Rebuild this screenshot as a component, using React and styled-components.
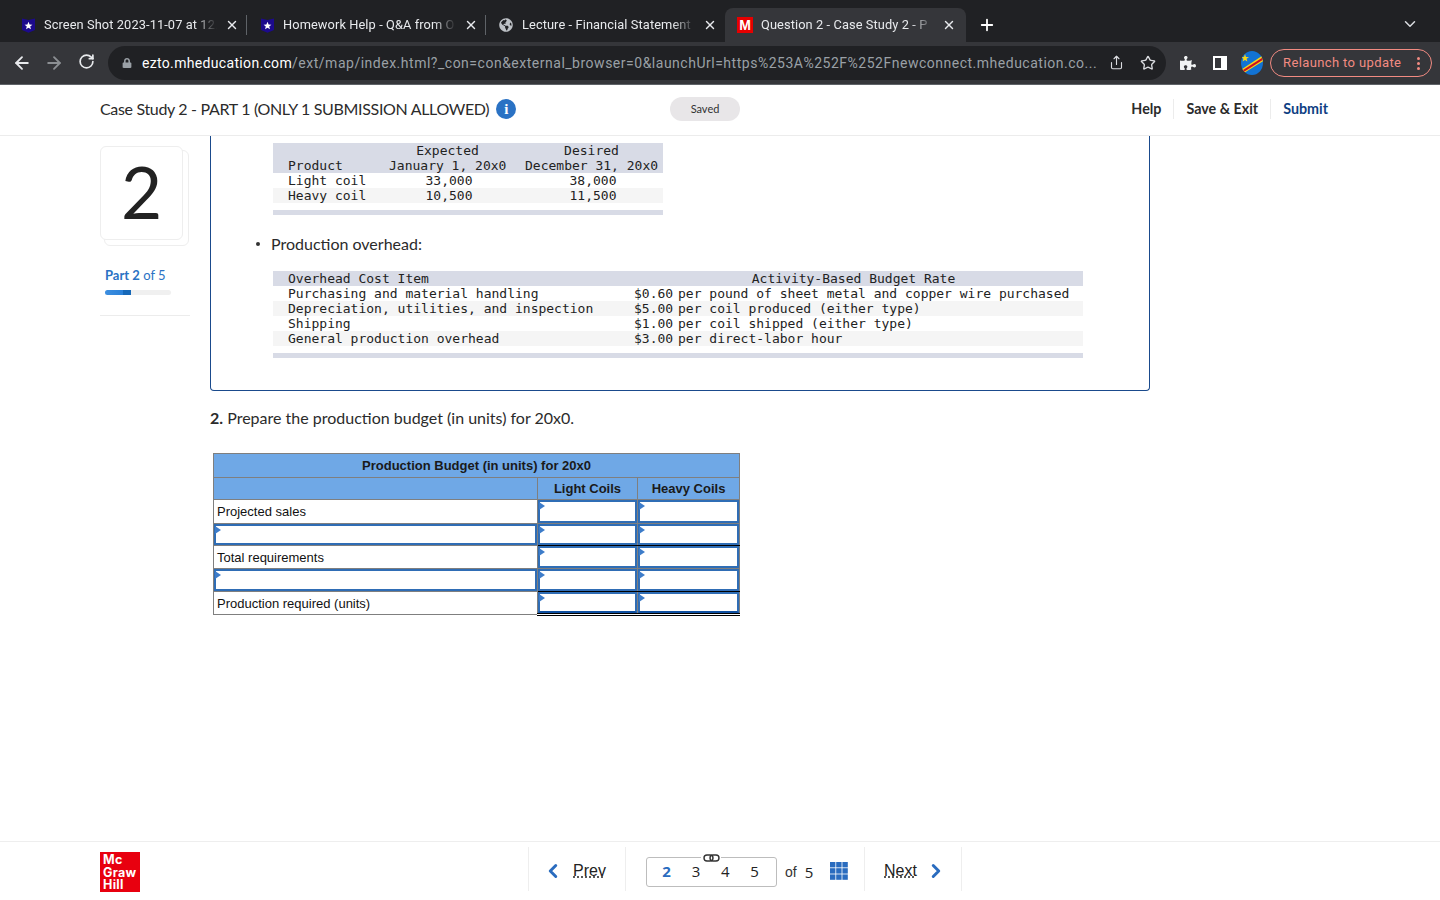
import React from 'react';
import styled, { createGlobalStyle } from 'styled-components';
import { ArrowLeft, ArrowRight, RotateCw, Share, Star, X, Plus, ChevronDown, ChevronLeft, ChevronRight } from 'lucide-react';
import { FaLock, FaPuzzlePiece, FaGlobeAmericas } from 'react-icons/fa';

const Global = createGlobalStyle`
  html, body { margin: 0; padding: 0; background: #fff; overflow: hidden; }
  * { box-sizing: border-box; }
`;

const Page = styled.div`
  width: 1440px; height: 900px; display: flex; flex-direction: column;
  font-family: Lato, "Open Sans", sans-serif; color: #2b2b2b; background: #fff;
`;

const TabStrip = styled.div`
  height: 42px; background: #202124; display: flex; align-items: flex-end; padding-left: 8px;
`;
const Tab = styled.div`
  width: ${p => (p.$active ? 241 : 239)}px; height: 34px; display: flex; align-items: center;
  padding: 0 ${p => (p.$active ? 10 : 8)}px 0 12px; position: relative;
  background: ${p => (p.$active ? '#35363a' : 'transparent')};
  border-radius: 8px 8px 0 0;
  &::after {
    content: ''; position: absolute; right: 0; top: 7px; height: 20px; width: 1px;
    background: ${p => (p.$sep ? '#5f6368' : 'transparent')};
  }
`;
const Fav = styled.span`
  width: 16px; height: 16px; flex: none; display: flex; align-items: center; justify-content: center; margin-right: 8px;
`;
const TabTitle = styled.span`
  flex: 1; font: 12.8px Roboto, sans-serif; letter-spacing: .1px; color: #e8eaed; white-space: nowrap; min-width: 0; margin-bottom: 2px;
  -webkit-mask-image: linear-gradient(to right, #000 87%, transparent 100%);
  mask-image: linear-gradient(to right, #000 87%, transparent 100%);
`;
const TabClose = styled(X)`
  flex: none; margin-left: 8px; color: #e8eaed;
`;
const NewTab = styled(Plus)`
  color: #fff; margin-left: 12px; margin-bottom: 8px;
`;
const TabMenu = styled(ChevronDown)`
  color: #dadce0; margin-left: auto; margin-right: 21px; margin-bottom: 9px;
`;
const MLogo = styled.span`
  width: 16px; height: 16px; background: #e60000; color: #fff; font: bold 14px/16px "Liberation Sans", sans-serif; text-align: center;
`;

const Toolbar = styled.div`
  height: 43px; background: #35363a; border-bottom: 1px solid #5f6368; display: flex; align-items: center; padding: 0 8px 1px 0;
`;
const NavIcon = styled.span`
  width: 32px; display: flex; justify-content: center; color: ${p => p.$dim ? '#8c8f93' : '#e8eaed'};
`;
const NavIcons = styled.div`
  display: flex; padding-left: 6px; width: 108px;
`;
const Omnibox = styled.div`
  width: 1058px; height: 34px; border-radius: 17px; background: #202124; display: flex; align-items: center; padding: 0 2px 0 14px;
`;
const LockWrap = styled.span`
  color: #9aa0a6; display: flex; width: 20px;
`;
const Url = styled.span`
  width: 958px; font: 14px Roboto, sans-serif; color: #9aa0a6; white-space: nowrap; letter-spacing: .51px;
  b { font-weight: 400; color: #fff; letter-spacing: .33px; }
`;
const OmniIcon = styled.span`
  width: 32px; display: flex; justify-content: center; color: #dadce0;
`;
const ExtIcons = styled.div`
  display: flex; align-items: center; margin-left: 6px;
`;
const ExtSlot = styled.span`
  width: 32px; display: flex; justify-content: center; color: #f1f3f4;
`;
const SidePanelIcon = styled.span`
  width: 14px; height: 14px; border: 2px solid #fff; border-right-width: 6px; background: #35363a;
`;
const Relaunch = styled.div`
  margin-left: 2px; width: 162px; height: 28px; border: 1px solid #f28b82; border-radius: 14px; display: flex; align-items: center;
  padding-left: 12px; color: #f28b82; font: 13px Roboto, sans-serif; letter-spacing: .38px; position: relative;
`;
const Dots = styled.span`
  position: absolute; right: 11px; top: 7px; display: flex; flex-direction: column; gap: 2px;
  i { width: 3px; height: 3px; border-radius: 50%; background: #f28b82; display: block; }
`;

const Header = styled.header`
  height: 51px; flex: none; display: flex; align-items: center; padding: 0 112px 3px 100px; border-bottom: 1px solid #ececec;
`;
const TitleBlock = styled.div`
  width: 570px; display: flex; align-items: center; gap: 7px;
`;
const Title = styled.h1`
  margin: 0; font: 400 16px Lato, sans-serif; letter-spacing: -.33px; color: #2b2b2b; white-space: nowrap;
`;
const InfoDot = styled.span`
  width: 20px; height: 20px; border-radius: 50%; background: #2a72c4; color: #fff; display: flex; align-items: center; justify-content: center;
  font: bold 15px/20px "Liberation Serif", serif;
`;
const SavedPill = styled.span`
  width: 70px; height: 24px; border-radius: 12px; background: #e8e6e8; display: flex; align-items: center; justify-content: center;
  font: 11px Lato, sans-serif; color: #333;
`;
const HeaderLinks = styled.nav`
  margin-left: auto; display: flex; align-items: center;
`;
const HeaderLink = styled.span`
  font: 700 14.3px Lato, sans-serif; color: ${p => p.$primary ? '#0f3f83' : '#2b2b2b'}; padding: 0 12px;
  border-right: ${p => p.$sep ? '1px solid #ececec' : 'none'}; line-height: 20px;
  &:last-child { padding-right: 0; }
`;

const Main = styled.main`
  flex: 1; display: flex; padding-left: 100px; min-height: 0;
`;
const Side = styled.aside`
  width: 90px; padding-top: 10px; flex: none; display: flex; flex-direction: column;
`;
const NumberStack = styled.div`
  position: relative; width: 83px; height: 94px;
  &::before {
    content: ''; position: absolute; left: 4px; top: 4px; width: 83px; height: 94px; border: 1px solid #eee; border-radius: 6px; background: #fff;
  }
`;
const NumberCard = styled.div`
  position: relative; width: 83px; height: 94px; border: 1px solid #eee; border-radius: 6px; background: #fff; padding-bottom: 3px;
  display: flex; align-items: center; justify-content: center; font: 400 71px/1 Lato, sans-serif; color: #222;
`;
const PartLabel = styled.div`
  margin: 27px 0 0 5px; font: 13px Lato, sans-serif; color: #2a72c4; b { font-weight: 700; }
`;
const Progress = styled.div`
  margin: 7px 0 0 5px; width: 66px; height: 5px; border-radius: 3px; background: #f0f0f0; overflow: hidden;
`;
const ProgressFill = styled.div`
  height: 100%; background: linear-gradient(90deg, #3d8fe0 0%, #2a80d8 70%, #1668b8 70%);
`;
const SideRule = styled.div`
  margin-top: 20px; height: 1px; background: #ececec;
`;
const Content = styled.div`
  margin-left: 20px; width: 940px;
`;
const Card = styled.section`
  height: 255px; border: 1px solid #1a4a8c; border-top: none; border-radius: 0 0 4px 4px; padding: 7px 0 0 62px;
`;
const Mono = styled.div`
  font: 13px/15px "DejaVu Sans Mono", monospace; color: #222; white-space: pre;
`;
const MonoA = styled(Mono)`width: 390px;`;
const MonoB = styled(Mono)`width: 810px;`;
const RowA = styled.div`
  display: grid; grid-template-columns: 101px 117px 19px 133px; padding-left: 15px; height: 15px;
  background: ${p => p.$bg || 'transparent'};
`;
const CellCenter = styled.span`
  text-align: center; grid-column: ${p => p.$col};
`;
const CellData = styled(CellCenter)`
  padding-left: 3px;
`;
const EndBar = styled.div`
  height: 5px; background: #d8dbe6; margin-top: 7px;
`;
const RowB = styled.div`
  display: grid; grid-template-columns: 346px 44px 1fr; padding-left: 15px; height: 15px;
  background: ${p => p.$bg || 'transparent'};
`;
const RowBHead = styled.span`
  grid-column: 2 / 4; text-align: center; padding-right: 10px;
`;
const Bullet = styled.ul`
  margin: 17px 0 15px -16px; padding: 0; list-style: none; display: flex; align-items: center; gap: 11px;
  font: 16px/24px Lato, sans-serif;
  &::before { content: ''; width: 4px; height: 4px; border-radius: 50%; background: #333; margin-left: -1px; }
`;
const Question = styled.p`
  margin: 15px 0 0; font: 16px/24px Lato, sans-serif; color: #2b2b2b; b { font-weight: 700; }
`;
const Budget = styled.table`
  margin: 23px 0 0 3px; width: 526px; table-layout: fixed; border-collapse: collapse;
  font: 13px "Liberation Sans", Arial, sans-serif; color: #111;
`;
const Tr = styled.tr`
  height: ${p => p.$h}px;
`;
const Head = styled.th`
  background: #6fa8e6; border: 1px solid #7f7f7f; padding: 0; font-weight: 700; font-size: 13px; color: #1a1a1a;
`;
const Label = styled.td`
  border: 1px solid #7f7f7f; padding: 0 3px; background: #fff;
`;
const InputCell = styled.td`
  padding: 0; background: #fff; position: relative;
  border-top: 1px solid #7f7f7f; border-left: 1px solid #7f7f7f; border-right: 1px solid #7f7f7f;
  border-bottom: ${p => p.$total === 'double' ? '3px double #000' : p.$total ? '1px solid #000' : '1px solid #7f7f7f'};
`;
const InputBox = styled.div`
  height: ${p => p.$h}px; border: 2px solid #2f6db5; position: relative;
  border-bottom-color: ${p => p.$dark ? '#0f4fa0' : '#2f6db5'};
  &::before {
    content: ''; position: absolute; left: -1px; top: 0; border-left: 6px solid #3d7cc9; border-top: 4px solid transparent; border-bottom: 4px solid transparent;
  }
`;

const Footer = styled.footer`
  height: 59px; flex: none; border-top: 1px solid #eeeeee; display: flex; padding-left: 100px;
`;
const McLogo = styled.div`
  margin-top: 10px; width: 40px; height: 40px; background: #e8000f; color: #fff; padding: 2px 0 0 3px;
  font: 700 12.5px/12.5px Inter, sans-serif; letter-spacing: .3px;
`;
const Pagination = styled.nav`
  margin-left: 388px; margin-top: 5px; height: 44px; display: flex; align-items: center;
`;
const StepBtn = styled.div`
  width: ${p => p.$w}px; height: 100%; display: flex; align-items: center; padding: 3px 0 0 ${p => p.$pl}px; gap: ${p => p.$gap}px;
  border-left: 1px solid #eeeeee; border-right: ${p => p.$end ? '1px solid #eeeeee' : 'none'};
  font: 16px "Liberation Sans", sans-serif; color: #222;
  span { text-decoration: underline dotted; text-underline-offset: 1px; }
`;
const BlueChevL = styled(ChevronLeft)`color: #2a6cbf; flex: none;`;
const BlueChevR = styled(ChevronRight)`color: #2a6cbf; flex: none;`;
const Pager = styled.div`
  width: 239px; height: 100%; display: flex; align-items: center; padding: 6px 0 0 20px;
  border-left: 1px solid #eeeeee;
`;
const PageBox = styled.div`
  position: relative; width: 131px; height: 30px; border: 1px solid #bdbdbd; border-radius: 3px; display: flex; align-items: center; padding: 0 0 3px 5px;
`;
const PageNum = styled.span`
  width: 29.3px; text-align: center; font: ${p => p.$on ? 700 : 400} 15px "Open Sans", sans-serif; color: ${p => p.$on ? '#2a6cbf' : '#222'};
`;
const LinkBadge = styled.span`
  position: absolute; left: 54px; top: -6px; width: 20px; height: 12px; background: #fff; display: flex; justify-content: center; align-items: center;
`;
const OfText = styled.span`
  margin-left: 8px; font: 14px "Liberation Sans", sans-serif; color: #333;
`;
const OfNum = styled.span`
  margin-left: 8px; font: 15px "Open Sans", sans-serif; color: #222;
`;
const GridIcon = styled.svg`
  margin: -3px 0 0 17px; flex: none;
`;

const Shield = () => (
  <svg width="15" height="15" viewBox="0 0 15 15">
    <path d="M1 0.5 L7.5 2 L14 0.5 V12 L7.5 14.8 L1 12 Z" fill="#1c0a8c" />
    <path d="M7.5 3.8 L8.6 6.6 L11.4 6.8 L9.2 8.5 L10 11.2 L7.5 9.7 L5 11.2 L5.8 8.5 L3.6 6.8 L6.4 6.6 Z" fill="#fff" />
  </svg>
);

const Flag = () => (
  <svg width="22" height="24" viewBox="0 0 22 24">
    <defs><clipPath id="fl"><ellipse cx="11" cy="12" rx="11" ry="12" /></clipPath></defs>
    <g clipPath="url(#fl)">
      <rect width="22" height="24" fill="#1273d4" />
      <path d="M-2 20 L24 3 V9 L-2 25 Z" fill="#f7d618" />
      <path d="M-2 21.5 L24 5 V7.5 L-2 24 Z" fill="#ce1021" />
      <path d="M4 3 L5 6 L8 6 L5.6 7.8 L6.4 10.6 L4 9 L1.6 10.6 L2.4 7.8 L0 6 L3 6 Z" fill="#f7d618" />
    </g>
  </svg>
);

const rowsA = [
  ['Light coil', '33,000', '38,000', 'transparent'],
  ['Heavy coil', '10,500', '11,500', '#f5f5f5'],
];
const rowsB = [
  ['Purchasing and material handling', '$0.60', 'per pound of sheet metal and copper wire purchased', 'transparent'],
  ['Depreciation, utilities, and inspection', '$5.00', 'per coil produced (either type)', '#f5f5f5'],
  ['Shipping', '$1.00', 'per coil shipped (either type)', 'transparent'],
  ['General production overhead', '$3.00', 'per direct-labor hour', '#f5f5f5'],
];
const tabs = [
  { fav: <Shield />, title: 'Screen Shot 2023-11-07 at 12.', sep: true },
  { fav: <Shield />, title: 'Homework Help - Q&A from O', sep: true },
  { fav: <FaGlobeAmericas size={14} color="#bdc1c6" />, title: 'Lecture - Financial Statement' },
  { fav: <MLogo>M</MLogo>, title: 'Question 2 - Case Study 2 - P', active: true },
];

const BudgetRow = ({ h, label, total }) => (
  <Tr $h={h}>
    {label ? <Label>{label}</Label> : <InputCell><InputBox $h={h - 1} /></InputCell>}
    <InputCell $total={total}><InputBox $h={h - 1} $dark={total === 'double'} /></InputCell>
    <InputCell $total={total}><InputBox $h={h - 1} $dark={total === 'double'} /></InputCell>
  </Tr>
);

export default function App() {
  return (
    <Page>
      <Global />
      <TabStrip>
        {tabs.map(t => (
          <Tab key={t.title} $active={t.active} $sep={t.sep}>
            <Fav>{t.fav}</Fav>
            <TabTitle>{t.title}</TabTitle>
            <TabClose size={14} strokeWidth={2.4} />
          </Tab>
        ))}
        <NewTab size={18} strokeWidth={2.4} />
        <TabMenu size={18} strokeWidth={2} />
      </TabStrip>
      <Toolbar>
        <NavIcons>
          <NavIcon><ArrowLeft size={20} strokeWidth={2.2} /></NavIcon>
          <NavIcon $dim><ArrowRight size={20} strokeWidth={2.2} /></NavIcon>
          <NavIcon><RotateCw size={17} strokeWidth={2.4} /></NavIcon>
        </NavIcons>
        <Omnibox>
          <LockWrap><FaLock size={10} /></LockWrap>
          <Url><b>ezto.mheducation.com</b>/ext/map/index.html?_con=con&amp;external_browser=0&amp;launchUrl=https%253A%252F%252Fnewconnect.mheducation.co...</Url>
          <OmniIcon><Share size={15} strokeWidth={1.8} /></OmniIcon>
          <OmniIcon><Star size={16} strokeWidth={2} /></OmniIcon>
        </Omnibox>
        <ExtIcons>
          <ExtSlot><FaPuzzlePiece size={16} /></ExtSlot>
          <ExtSlot><SidePanelIcon /></ExtSlot>
          <ExtSlot><Flag /></ExtSlot>
        </ExtIcons>
        <Relaunch>Relaunch to update<Dots><i /><i /><i /></Dots></Relaunch>
      </Toolbar>
      <Header>
        <TitleBlock>
          <Title>Case Study 2 - PART 1 (ONLY 1 SUBMISSION ALLOWED)</Title>
          <InfoDot>i</InfoDot>
        </TitleBlock>
        <SavedPill>Saved</SavedPill>
        <HeaderLinks>
          <HeaderLink $sep>Help</HeaderLink>
          <HeaderLink $sep>Save &amp; Exit</HeaderLink>
          <HeaderLink $primary>Submit</HeaderLink>
        </HeaderLinks>
      </Header>
      <Main>
        <Side>
          <NumberStack><NumberCard>2</NumberCard></NumberStack>
          <PartLabel><b>Part 2</b> of 5</PartLabel>
          <Progress><ProgressFill style={{ width: `${(2 / 5) * 100}%` }} /></Progress>
          <SideRule />
        </Side>
        <Content>
          <Card>
            <MonoA>
              <RowA $bg="#d8dbe6"><CellCenter $col={2}>Expected</CellCenter><CellCenter $col={4}>Desired</CellCenter></RowA>
              <RowA $bg="#d8dbe6"><span>Product</span><CellCenter $col={2}>January 1, 20x0</CellCenter><CellCenter $col={4}>December 31, 20x0</CellCenter></RowA>
              {rowsA.map(r => (
                <RowA key={r[0]} $bg={r[3]}><span>{r[0]}</span><CellData $col={2}>{r[1]}</CellData><CellData $col={4}>{r[2]}</CellData></RowA>
              ))}
              <EndBar />
            </MonoA>
            <Bullet><li>Production overhead:</li></Bullet>
            <MonoB>
              <RowB $bg="#d8dbe6"><span>Overhead Cost Item</span><RowBHead>Activity-Based Budget Rate</RowBHead></RowB>
              {rowsB.map(r => (
                <RowB key={r[0]} $bg={r[3]}><span>{r[0]}</span><span>{r[1]}</span><span>{r[2]}</span></RowB>
              ))}
              <EndBar />
            </MonoB>
          </Card>
          <Question><b>2.</b> Prepare the production budget (in units) for 20x0.</Question>
          <Budget>
            <colgroup><col width="324" /><col width="100" /><col width="102" /></colgroup>
            <tbody>
              <Tr $h={24}><Head colSpan={3}>Production Budget (in units) for 20x0</Head></Tr>
              <Tr $h={22}><Head /><Head>Light Coils</Head><Head>Heavy Coils</Head></Tr>
              <BudgetRow h={24} label="Projected sales" />
              <BudgetRow h={22} total="single" />
              <BudgetRow h={23} label="Total requirements" />
              <BudgetRow h={23} total="single" />
              <BudgetRow h={22} label="Production required (units)" total="double" />
            </tbody>
          </Budget>
        </Content>
      </Main>
      <Footer>
        <McLogo>Mc<br />Graw<br />Hill</McLogo>
        <Pagination>
          <StepBtn $w={97} $pl={13} $gap={9}><BlueChevL size={22} strokeWidth={3.2} /><span>Prev</span></StepBtn>
          <Pager>
            <PageBox>
              <PageNum $on>2</PageNum><PageNum>3</PageNum><PageNum>4</PageNum><PageNum>5</PageNum>
              <LinkBadge>
                <svg width="17" height="8" viewBox="0 0 17 8" fill="none" stroke="#333" strokeWidth="1.4">
                  <rect x="1" y="1" width="9" height="6" rx="3" />
                  <rect x="7" y="1" width="9" height="6" rx="3" />
                </svg>
              </LinkBadge>
            </PageBox>
            <OfText>of</OfText>
            <OfNum>5</OfNum>
            <GridIcon width="18" height="18" viewBox="0 0 18 18" fill="#2a6cbf">
              {[0, 1, 2].flatMap(r => [0, 1, 2].map(c => (
                <rect key={`${r}${c}`} x={c * 6.2} y={r * 6.2} width="5.4" height="5.4" />
              )))}
            </GridIcon>
          </Pager>
          <StepBtn $w={98} $pl={19} $gap={8} $end><span>Next</span><BlueChevR size={22} strokeWidth={3.2} /></StepBtn>
        </Pagination>
      </Footer>
    </Page>
  );
}
